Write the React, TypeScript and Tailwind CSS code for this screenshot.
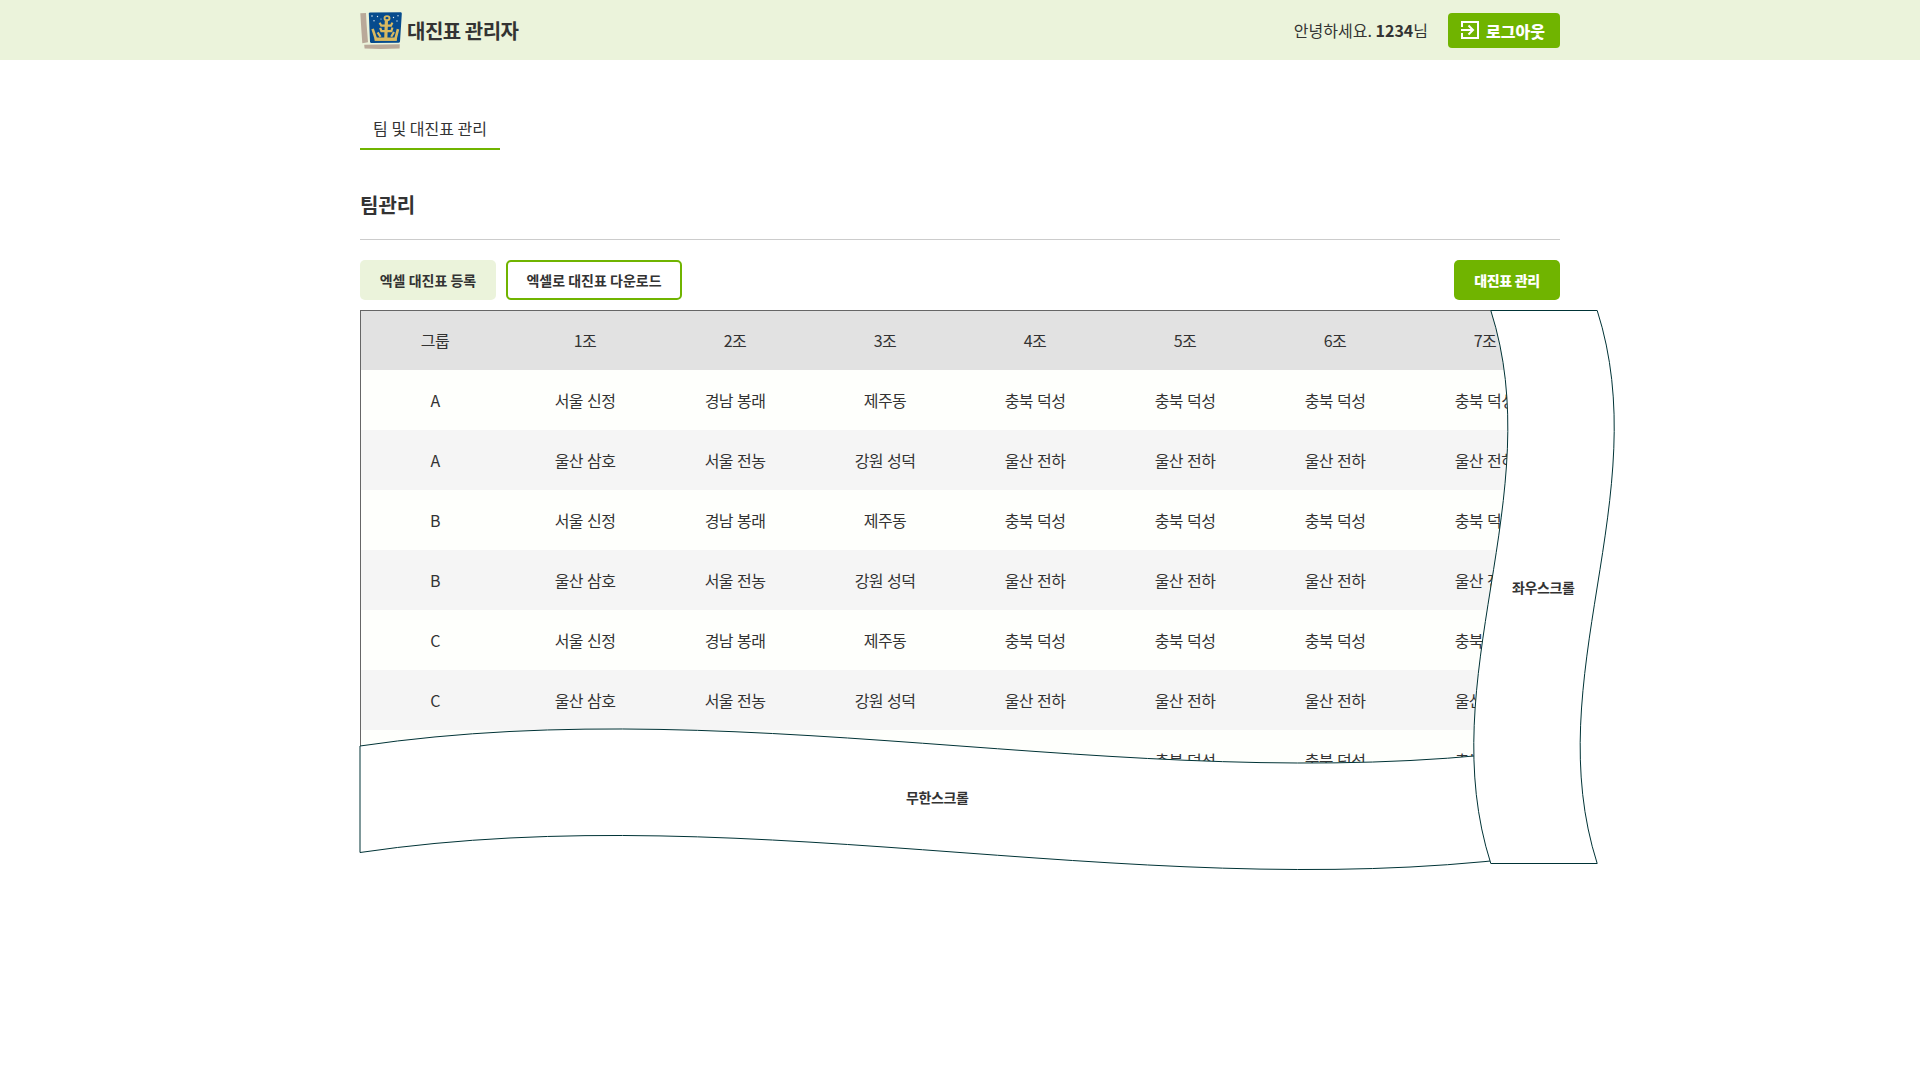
const headers = ['그룹', '1조', '2조', '3조', '4조', '5조', '6조', '7조'];

const oddTeams = ['서울 신정', '경남 봉래', '제주동', '충북 덕성', '충북 덕성', '충북 덕성', '충북 덕성'];
const evenTeams = ['울산 삼호', '서울 전농', '강원 성덕', '울산 전하', '울산 전하', '울산 전하', '울산 전하'];

const rows = ['A', 'A', 'B', 'B', 'C', 'C', 'D'].map((group, i) => [
  group,
  ...(i % 2 === 0 ? oddTeams : evenTeams),
]);

function Logo() {
  return (
    <svg className="mt-px h-[38px] w-[42px]" viewBox="0 0 42 38" fill="none">
      <path d="M0.3 1.3 6 .9 6.6 12 8 30.2 2.3 31.2 1.3 17Z" fill="#b9a999" />
      <path d="M4.2 32.7 22 32.4 39.8 32.2 39.6 36.6 21 37.1 4.6 36.6Z" fill="#b9a999" />
      <path d="M8.8 1.3 Q9 .5 10 .5 L40.8 .2 Q42 .3 41.8 1.8 L40 29.5 Q39.8 30.8 38.5 30.8 L11.5 31 Q10.2 31 10 29.8Z" fill="#064b8d" />
      <g stroke="#d9b960" strokeWidth="2.2">
        <ellipse cx="27" cy="6.2" rx="2.5" ry="2.1" strokeWidth="1.9" />
        <path d="M26.4 8.5 25.8 27" strokeWidth="3.2" />
        <path d="M19.6 10.8 21.3 13.6H31L32.4 10.6" />
        <path d="M20.2 15.8 21.4 19.2H31.4L32.4 15.5" />
        <path d="M12.6 16.8 16 27.2H35.4L38 17.2" strokeWidth="2.6" />
        <path d="M17.6 20.4 20.6 24.8M34 20 31.2 24.8" />
        <path d="M14.6 27.2H36.8" strokeWidth="3.4" />
      </g>
      <g fill="#dce8ef">
        <circle cx="12" cy="4" r=".8" />
        <circle cx="17.5" cy="4.5" r=".7" />
        <circle cx="14" cy="8.8" r=".7" />
        <circle cx="21" cy="7" r=".6" />
        <circle cx="33.5" cy="5.5" r=".7" />
        <circle cx="38" cy="3.8" r=".7" />
        <circle cx="37" cy="9" r=".7" />
      </g>
    </svg>
  );
}

function ExitIcon() {
  return (
    <svg className="size-[18px]" viewBox="0 0 18 18" fill="none" stroke="#fff" strokeWidth="2">
      <path d="M1 6V1H17V17H1V12" />
      <path d="M0 9H12M7.5 4.5 12 9 7.5 13.5" />
    </svg>
  );
}

export default function App() {
  return (
    <div className="min-h-screen bg-white font-['Noto_Sans_CJK_KR',sans-serif] text-base text-[#333]">
      <header className="h-[60px] bg-[#ebf3db]">
        <div className="mx-auto flex h-full w-[1200px] items-center justify-between">
          <div className="flex items-center gap-[5px]">
            <Logo />
            <h1 className="pt-0.5 text-xl font-bold tracking-tight">대진표 관리자</h1>
          </div>
          <div className="flex items-center gap-5">
            <p>
              안녕하세요. <b className="font-bold">1234</b>님
            </p>
            <button className="flex h-[35px] w-28 items-center gap-[7px] rounded bg-[#70b400] pl-[13px] font-black text-white">
              <ExitIcon />
              <span className="pt-0.5">로그아웃</span>
            </button>
          </div>
        </div>
      </header>

      <main className="mx-auto w-[1200px]">
        <nav className="flex pt-[50px]">
          <a className="flex h-10 w-[140px] items-center justify-center border-b-2 border-[#70b400] pb-0.5">팀 및 대진표 관리</a>
        </nav>
        <h2 className="mt-10 flex h-[50px] items-start border-b border-[#ccc] pt-px text-xl font-bold">팀관리</h2>

        <div className="mt-5 flex h-10 items-stretch gap-2.5 text-sm font-bold">
          <button className="w-[136px] rounded-[5px] bg-[#ebf3db]">엑셀 대진표 등록</button>
          <button className="w-44 rounded-[5px] border-2 border-[#70b400] bg-white">엑셀로 대진표 다운로드</button>
          <button className="ml-auto w-[106px] rounded-[5px] bg-[#70b400] font-black tracking-tight text-white">대진표 관리</button>
        </div>

        <section className="relative mt-2.5">
          <div className="border-t border-[#666] tracking-[-0.035em] [word-spacing:1px]">
            <div className="grid h-[59px] grid-cols-8 items-center bg-[#e2e2e2] pb-px text-center shadow-[inset_1px_0_0_#666]">
              {headers.map((h) => (
                <span key={h}>{h}</span>
              ))}
            </div>
            {rows.map((row, r) => (
              <div
                key={r}
                className="grid h-[60px] grid-cols-8 items-center text-center shadow-[inset_1px_0_0_#666] odd:bg-[#f5f5f5] even:bg-[#fefffc]"
              >
                {row.map((cell, c) => (
                  <span key={c}>{cell}</span>
                ))}
              </div>
            ))}
          </div>

          <svg
            className="absolute top-0 left-0 h-[570px] w-[1270px] overflow-visible"
            fill="#fff"
            stroke="#003336"
            strokeWidth="1"
          >
            <path d="M0 436 C400 377 800 495 1200 436 V542.5 C800 601.5 400 483.5 0 542.5Z" />
            <path d="M1130.8 .5 H1237.2 C1296.2 184.8 1178.2 369.2 1237.2 553.5 H1130.8 C1071.8 369.2 1189.8 184.8 1130.8 .5Z" />
          </svg>
          <span className="absolute top-[477px] left-[546px] text-sm font-bold tracking-tight whitespace-nowrap">무한스크롤</span>
          <span className="absolute top-[267px] left-[1152px] text-sm font-bold tracking-tight whitespace-nowrap">좌우스크롤</span>
        </section>
      </main>
    </div>
  );
}
